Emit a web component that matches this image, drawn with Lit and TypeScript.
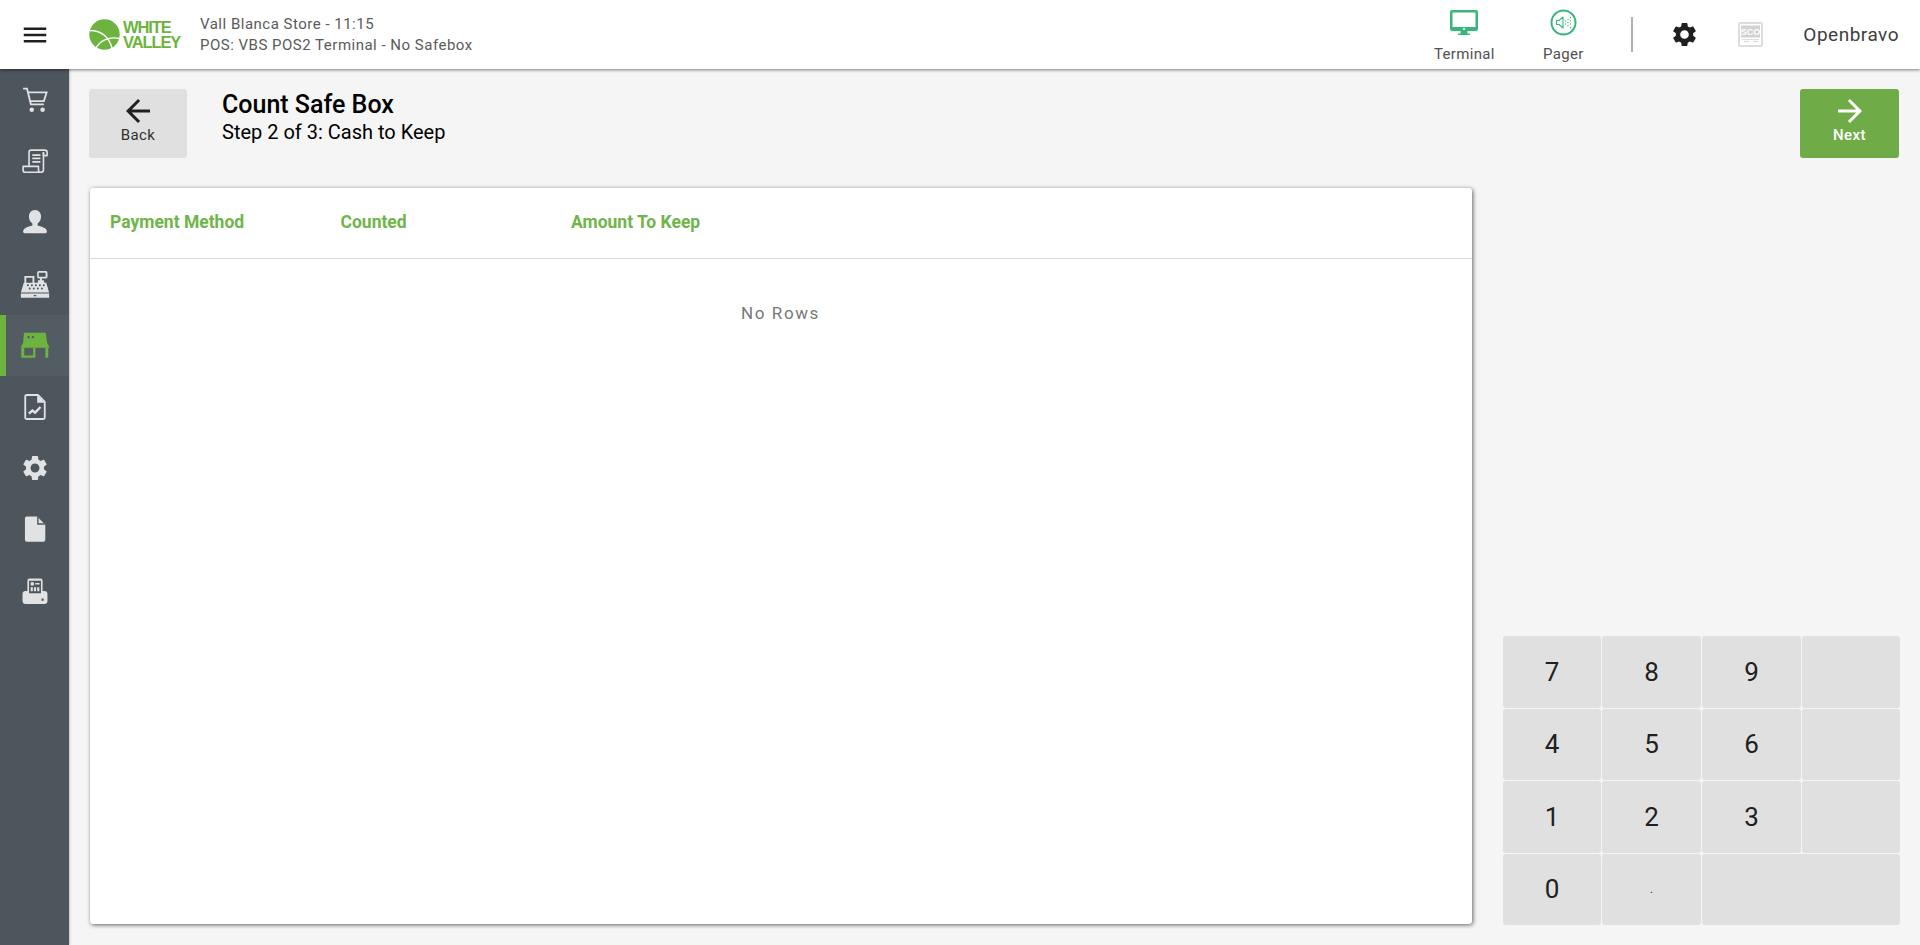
import { LitElement, html, css, svg } from "lit";
import { customElement } from "lit/decorators.js";

const GEAR = "M19.14,12.94c0.04-0.3,0.06-0.61,0.06-0.94c0-0.32-0.02-0.64-0.07-0.94l2.03-1.58c0.18-0.14,0.23-0.41,0.12-0.61 l-1.92-3.32c-0.12-0.22-0.37-0.29-0.59-0.22l-2.39,0.96c-0.5-0.38-1.03-0.7-1.62-0.94L14.4,2.81c-0.04-0.24-0.24-0.41-0.48-0.41 h-3.84c-0.24,0-0.43,0.17-0.47,0.41L9.25,5.35C8.66,5.59,8.12,5.92,7.63,6.29L5.24,5.33c-0.22-0.08-0.47,0-0.59,0.22L2.74,8.87 C2.62,9.08,2.66,9.34,2.86,9.48l2.03,1.58C4.84,11.36,4.8,11.69,4.8,12s0.02,0.64,0.07,0.94l-2.03,1.58 c-0.18,0.14-0.23,0.41-0.12,0.61l1.92,3.32c0.12,0.22,0.37,0.29,0.59,0.22l2.39-0.96c0.5,0.38,1.03,0.7,1.62,0.94l0.36,2.54 c0.05,0.24,0.24,0.41,0.48,0.41h3.84c0.24,0,0.44-0.17,0.47-0.41l0.36-2.54c0.59-0.24,1.13-0.56,1.62-0.94l2.39,0.96 c0.22,0.08,0.47,0,0.59-0.22l1.92-3.32c0.12-0.22,0.07-0.47-0.12-0.61L19.14,12.94z M12,15.6c-1.98,0-3.6-1.62-3.6-3.6 s1.62-3.6,3.6-3.6s3.6,1.62,3.6,3.6S13.98,15.6,12,15.6z";

const sideIcons = [
  { size: 26, icon: svg`<g fill="none" stroke="currentColor" stroke-width="1.700"><path d="M1 1.500h3.600l3.600 14.500h12"/><path d="M5.700 5h17l-2.500 8H7.600"/></g><circle cx="9" cy="21" r="2.100" fill="currentColor"/><circle cx="19" cy="21" r="2.100" fill="currentColor"/>` },
  { size: 26, icon: svg`<g fill="none" stroke="currentColor" stroke-width="1.500" stroke-linejoin="round"><path d="M6.500 17V4a2 2 0 0 1 2-2H21a2.200 2.200 0 0 1 2.200 2.200V7h-3.400V4"/><path d="M19.800 4V20a2.400 2.400 0 0 1-2.200 2.400H3.200A2.200 2.200 0 0 1 1 20.200V17h14.200v3.200a2.200 2.200 0 0 0 2.200 2.200"/><path d="M9.500 6.500h7.500M9.500 9.600h7.500M9.500 12.700h7.500" stroke-width="1.600"/></g>` },
  { size: 26, icon: svg`<path fill="currentColor" d="M12 1c3.300 0 5.600 2.700 5.600 6 0 2.900-1.400 5.300-3.200 6.400v1.300c0 1 4.300 1.300 6.800 3 1.300.9 1.800 2 1.800 3.300 0 .8-.6 1.300-1.300 1.300H2.300c-.7 0-1.300-.5-1.300-1.300 0-1.300.5-2.400 1.800-3.300 2.500-1.700 6.800-2 6.800-3v-1.300C7.800 12.300 6.400 9.900 6.400 7c0-3.300 2.300-6 5.600-6z"/>` },
  { size: 30, icon: svg`<path fill="currentColor" fill-rule="evenodd" d="M3.500 5.500h8v5.500h2.800V9h1.700V7.600h-.8a1.500 1.500 0 0 1-1.500-1.500V3a1.500 1.500 0 0 1 1.500-1.500h5.800A1.500 1.500 0 0 1 22 3v3.100a1.500 1.500 0 0 1-1.500 1.500h-3V9h1.500l.5 2H21l2.300 7.800H.7L3 11h.5zM5 7v4h5V7zM15 3v3.100h5.500V3z"/><g fill="#4d555d"><circle cx="6.300" cy="13" r=".8"/><circle cx="9.500" cy="13" r=".8"/><circle cx="12.700" cy="13" r=".8"/><circle cx="15.900" cy="13" r=".8"/><circle cx="19" cy="13" r=".8"/><circle cx="7.800" cy="15.600" r=".8"/><circle cx="11" cy="15.600" r=".8"/><circle cx="14.300" cy="15.600" r=".8"/><circle cx="17.500" cy="15.600" r=".8"/></g><path fill="currentColor" fill-rule="evenodd" d="M.7 19.600h22.600V23H.7zM11 20.800v1h2v-1z"/>` },
  { size: 30, icon: svg`<path fill="#6db33f" fill-rule="evenodd" d="M3.200 2.100h17.300l1.200 8 2 4H.5l2-4zM6.800 4.600a1 1 0 1 0 .01 0zM10.300 4.600a1 1 0 1 0 .01 0z"/><path fill="#6db33f" d="M1 14.100h2.400v8H1zM20.300 14.100h2.300v8h-2.300zM3.200 20.300h9.100v1.800H3.200zM10.500 14.100h1.800v6.200h-1.800z"/>` },
  { size: 26, icon: svg`<path fill="none" stroke="currentColor" stroke-width="1.700" stroke-linejoin="round" d="M3 2.200A1.400 1.400 0 0 1 4.400.9h10.300l6.300 6.400v14.400a1.400 1.400 0 0 1-1.400 1.400H4.400A1.400 1.400 0 0 1 3 21.700z"/><path fill="currentColor" d="M14 1l7 7h-7z"/><path fill="none" stroke="currentColor" stroke-width="2.200" d="M6.300 18l3.400-2.800 2.400 2 5-5.200"/>` },
  { size: 26, icon: svg`<path fill="currentColor" transform="translate(-1.800 -1.800) scale(1.150)" d="${GEAR}"/>` },
  { size: 26, icon: svg`<path fill="currentColor" d="M4.500.5h9.500l7.500 7.500v14a1.800 1.800 0 0 1-1.800 1.800H4.500A1.800 1.800 0 0 1 2.700 22V2.300A1.800 1.800 0 0 1 4.500.5z"/><path fill="#4d555d" d="M14 .5V8h7.500l-1.300-1.300h-4.900V1.800z"/>` },
  { size: 26, icon: svg`<path fill="currentColor" fill-rule="evenodd" d="M5 12V2.500A2 2 0 0 1 7 .5h10a2 2 0 0 1 2 2V12h1.700a2.800 2.800 0 0 1 2.800 2.800v6.400a2.800 2.800 0 0 1-2.800 2.800H3.300a2.800 2.800 0 0 1-2.800-2.800v-6.400A2.800 2.800 0 0 1 3.300 12zM6.500 2.500V14h11V2.500z"/><path fill="currentColor" d="M8 4h3v3H8zM12.200 4.500h4v1.400h-4zM8 8.500h2v3.800H8zM11 8.500h2v3.800h-2zM14 8.500h2v3.800h-2z"/><path fill="#4d555d" d="M18 19h2v2h-2z"/>` },
];

@customElement("app-root")
export class AppRoot extends LitElement {
  static styles = css`
    :host {
      display: grid;
      grid-template-rows: 69px 1fr;
      height: 100vh;
      overflow: hidden;
      background: #f5f5f5;
      font-family: Roboto, "Liberation Sans", sans-serif;
      color: #202020;
    }
    svg { display: block; }
    .header {
      position: relative;
      z-index: 2;
      display: flex;
      align-items: center;
      background: #fff;
      box-shadow: 0 1px 3px rgba(0, 0, 0, 0.5);
    }
    .menu { width: 69px; display: flex; justify-content: center; color: #202020; }
    .logo { display: flex; align-items: center; width: 111px; margin-left: 20px; gap: 3px; }
    .logo-text {
      font-family: "Liberation Sans", sans-serif;
      font-weight: 700;
      font-size: 16.5px;
      line-height: 15px;
      letter-spacing: -1.1px;
      color: #6db33f;
    }
    .store {
      font-size: 15px;
      line-height: 21px;
      letter-spacing: 0.5px;
      color: #5a5a5a;
    }
    .spacer { flex: 1; }
    .hbtn {
      width: 100px;
      align-self: flex-start;
      display: flex;
      flex-direction: column;
      align-items: center;
      font-size: 15px;
      letter-spacing: 0.3px;
      color: #505050;
      gap: 9px;
      padding-top: 9px;
    }
    .hbtn svg { color: #38b67c; }
    .hbtn.term { margin-right: -1px; }
    .divider { width: 2px; height: 35px; background: #b0b0b0; margin-left: 18px; margin-right: 37px; }
    .gear { color: #202020; margin-right: 39px; }
    .sco { margin-right: 40px; }
    .user { font-size: 19px; letter-spacing: 0.5px; color: #404040; margin-right: 21px; }
    .body { display: grid; grid-template-columns: 69px 1fr; min-height: 0; }
    .side { background: #4d555d; display: flex; flex-direction: column; box-shadow: 1px 0 2px rgba(0,0,0,.2); }
    .item { height: 61.4px; display: flex; align-items: center; justify-content: center; color: #e0e2e4; flex: none; }
    .item.on { background: #545c63; box-shadow: inset 6px 0 0 #6db33f; }
    .main { padding: 20px 21px 21px 20px; display: flex; flex-direction: column; min-width: 0; }
    .top { display: flex; align-items: flex-start; height: 69px; margin-bottom: 30px; }
    .nav {
      width: 98px;
      height: 69px;
      border-radius: 3px;
      background: #e0e0e0;
      display: flex;
      flex-direction: column;
      align-items: center;
      justify-content: flex-start;
      font-size: 15px;
      line-height: 16px;
      letter-spacing: 0.4px;
      color: #303030;
      padding-top: 4px;
      box-sizing: border-box;
    }
    .nav.next { width: 99px; background: #6fac48; color: #fff; font-weight: 500; }
    .titles { flex: 1; margin-left: 35px; padding-top: 1px; color: #000; }
    h1 { margin: 0; font-size: 25px; line-height: 29px; font-weight: 500; }
    h2 { margin: 0; font-size: 20px; line-height: 27px; font-weight: 400; }
    .content { flex: 1; display: grid; grid-template-columns: 1382px 397px; column-gap: 31px; min-height: 0; margin: 0 -1px 0 1px; }
    .card {
      background: #fff;
      border-radius: 3px;
      box-shadow: 1px 1px 4px rgba(0, 0, 0, 0.6);
      display: flex;
      flex-direction: column;
    }
    .cols {
      display: grid;
      grid-template-columns: repeat(6, 230.5px);
      height: 71px;
      padding-bottom: 3px;
      box-sizing: border-box;
      align-items: center;
      padding-left: 20px;
      border-bottom: 1px solid #d8d8d8;
      color: #6fb54a;
      font-weight: 700;
      font-size: 17.5px;
      flex: none;
    }
    .empty {
      text-align: center;
      margin-top: 44px;
      font-size: 17px;
      letter-spacing: 1.6px;
      color: #777;
      padding-right: 1px;
    }
    .pad { align-self: end; display: grid; grid-template-columns: 98px 99px 99px 98px; grid-template-rows: repeat(4, 71.5px); gap: 1px; height: 289px; margin-bottom: -1px; }
    .key {
      background: #e0e0e0;
      border-radius: 3px;
      display: flex;
      align-items: center;
      justify-content: center;
      font-size: 26px;
      color: #202020;
      box-sizing: border-box;
    }
    .key.dot { font-size: 11px; }
    .key.wide { grid-column: span 2; }
    .nav span { margin-top: -2px; }
  `;

  render() {
    const keys = ["7", "8", "9", "", "4", "5", "6", "", "1", "2", "3", "", "0"];
    return html`
      <div class="header">
        <div class="menu">
          <svg width="30" height="30" viewBox="0 0 24 24" fill="currentColor"><path d="M3 18h18v-2H3v2zm0-5h18v-2H3v2zm0-7v2h18V6H3z"/></svg>
        </div>
        <div class="logo">
          <svg width="31" height="31" viewBox="0 0 31 31">
            <circle cx="15.5" cy="15.5" r="15.2" fill="#6db33f"/>
            <g fill="none" stroke="#fff" stroke-width="1.3">
              <path d="M0.5 11.5C9 11.5 19 15 23 29"/>
              <path d="M7 29C11 22 20 17 30.5 19.5"/>
            </g>
          </svg>
          <div class="logo-text">WHITE<br />VALLEY</div>
        </div>
        <div class="store">
          <div>Vall Blanca Store - 11:15</div>
          <div>POS: VBS POS2 Terminal - No Safebox</div>
        </div>
        <div class="spacer"></div>
        <div class="hbtn term">
          <svg width="30" height="27" viewBox="0 0 30 27"><path fill="currentColor" fill-rule="evenodd" d="M3 1h24a2 2 0 0 1 2 2v17a2 2 0 0 1-2 2h-8.500v2.500H21V26H9v-1.500h2.500V22H3a2 2 0 0 1-2-2V3a2 2 0 0 1 2-2zM3.500 3.500V18h23V3.500z"/><circle cx="15" cy="20" r="1" fill="#fff"/></svg>
          <span>Terminal</span>
        </div>
        <div class="hbtn">
          <svg width="27" height="27" viewBox="0 0 27 27"><circle cx="13.5" cy="13.5" r="12" fill="none" stroke="currentColor" stroke-width="2"/><path fill="none" stroke="currentColor" stroke-width="1.100" stroke-linejoin="round" d="M6.500 11.500h2.500l4-3.500v11l-4-3.500H6.500z"/><g fill="currentColor"><circle cx="15.5" cy="12" r=".7"/><circle cx="15.5" cy="15" r=".7"/><circle cx="18" cy="13.5" r=".7"/><circle cx="18" cy="10.5" r=".7"/><circle cx="18" cy="16.5" r=".7"/><circle cx="20.5" cy="8.5" r=".7"/><circle cx="20.5" cy="12" r=".7"/><circle cx="20.5" cy="15" r=".7"/><circle cx="20.5" cy="18.5" r=".7"/></g></svg>
          <span>Pager</span>
        </div>
        <div class="divider"></div>
        <div class="gear"><svg width="29" height="29" viewBox="0 0 24 24" fill="currentColor"><path d="${GEAR}"/></svg></div>
        <div class="sco">
          <svg width="25" height="25" viewBox="0 0 25 25"><rect x="1" y="1" width="23" height="23" rx="1" fill="none" stroke="#ddd" stroke-width="2"/><rect x="3" y="3.500" width="19" height="12" fill="#d2d2d2"/><text x="12.500" y="13" text-anchor="middle" font-family="Liberation Sans" font-weight="700" font-size="9" fill="#fff">SCO</text><path d="M4 17.500h17" stroke="#ddd"/><path d="M6 19.500h5M15 19.500h5" stroke="#ddd" stroke-width="1.500"/></svg>
        </div>
        <div class="user">Openbravo</div>
      </div>
      <div class="body">
        <div class="side">
          ${sideIcons.map((it, i) => html`<div class="item ${i === 4 ? "on" : ""}"><svg width=${it.size} height=${it.size} viewBox="0 0 24 24">${it.icon}</svg></div>`)}
        </div>
        <div class="main">
          <div class="top">
            <div class="nav">
              <svg width="36" height="36" viewBox="0 0 24 24" fill="#202020"><path d="M20 11H7.830l5.590-5.590L12 4l-8 8 8 8 1.410-1.410L7.830 13H20v-2z"/></svg>
              <span>Back</span>
            </div>
            <div class="titles">
              <h1>Count Safe Box</h1>
              <h2>Step 2 of 3: Cash to Keep</h2>
            </div>
            <div class="nav next">
              <svg width="36" height="36" viewBox="0 0 24 24" fill="#fff"><path d="M12 4l-1.410 1.410L16.170 11H4v2h12.170l-5.580 5.590L12 20l8-8z"/></svg>
              <span>Next</span>
            </div>
          </div>
          <div class="content">
            <div class="card">
              <div class="cols"><span>Payment Method</span><span>Counted</span><span>Amount To Keep</span></div>
              <div class="empty">No Rows</div>
            </div>
            <div class="pad">
              ${keys.map((k) => html`<div class="key">${k}</div>`)}
              <div class="key dot">.</div>
              <div class="key wide"></div>
            </div>
          </div>
        </div>
      </div>
    `;
  }
}
